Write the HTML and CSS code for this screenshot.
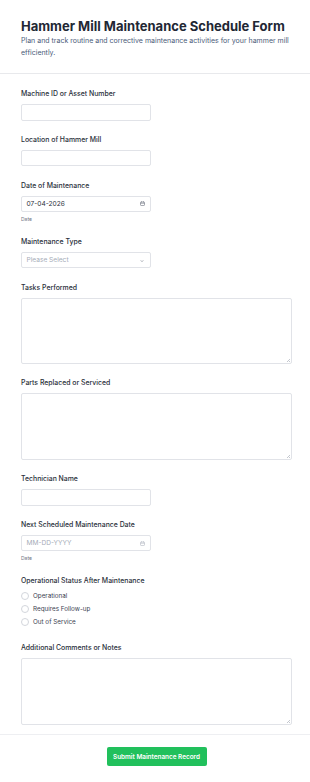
FILE: index.html
```html
<!DOCTYPE html>
<html lang="en">
<head>
<meta charset="utf-8">
<title>Hammer Mill Maintenance Schedule Form</title>
<link rel="stylesheet" href="styles.css">
</head>
<body>
<header class="header">
  <h1 class="title">Hammer Mill Maintenance Schedule Form</h1>
  <p class="subtitle">Plan and track routine and corrective maintenance activities for your hammer mill efficiently.</p>
</header>
<form class="form">
  <div class="field">
    <label class="label">Machine ID or Asset Number</label>
    <input class="input short" type="text">
  </div>
  <div class="field">
    <label class="label">Location of Hammer Mill</label>
    <input class="input short" type="text">
  </div>
  <div class="field">
    <label class="label">Date of Maintenance</label>
    <div class="input short boxed"><span class="value">07-04-2026</span>
      <svg class="cal" viewBox="0 0 10 10" width="5" height="5"><rect x="1" y="2" width="8" height="7" rx="1.2" fill="none" stroke="#6b7280" stroke-width="1.2"/><path d="M3 0.5v2.5M7 0.5v2.5M1 4.5h8" stroke="#6b7280" stroke-width="1.2"/></svg>
    </div>
    <div class="sub">Date</div>
  </div>
  <div class="field">
    <label class="label">Maintenance Type</label>
    <div class="input short boxed"><span class="placeholder">Please Select</span>
      <svg class="chev" viewBox="0 0 10 10" width="4" height="4"><path d="M2 3.5l3 3 3-3" fill="none" stroke="#6b7280" stroke-width="1.6"/></svg>
    </div>
  </div>
  <div class="field">
    <label class="label">Tasks Performed</label>
    <div class="area"><textarea class="textarea"></textarea></div>
  </div>
  <div class="field">
    <label class="label">Parts Replaced or Serviced</label>
    <div class="area"><textarea class="textarea"></textarea></div>
  </div>
  <div class="field">
    <label class="label">Technician Name</label>
    <input class="input short" type="text">
  </div>
  <div class="field">
    <label class="label">Next Scheduled Maintenance Date</label>
    <div class="input short boxed"><span class="placeholder">MM-DD-YYYY</span>
      <svg class="cal" viewBox="0 0 10 10" width="5" height="5"><rect x="1" y="2" width="8" height="7" rx="1.2" fill="none" stroke="#b4b9c3" stroke-width="1.2"/><path d="M3 0.5v2.5M7 0.5v2.5M1 4.5h8" stroke="#b4b9c3" stroke-width="1.2"/></svg>
    </div>
    <div class="sub">Date</div>
  </div>
  <div class="field">
    <label class="label radio-label">Operational Status After Maintenance</label>
    <div class="radios">
      <label class="radio"><span class="dot"></span>Operational</label>
      <label class="radio"><span class="dot"></span>Requires Follow-up</label>
      <label class="radio"><span class="dot"></span>Out of Service</label>
    </div>
  </div>
  <div class="field last">
    <label class="label">Additional Comments or Notes</label>
    <div class="area"><textarea class="textarea"></textarea></div>
  </div>
</form>
<footer class="footer">
  <button class="submit" type="button">Submit Maintenance Record</button>
</footer>
</body>
</html>
```
FILE: styles.css
```css
html, body {
  margin: 0;
  padding: 0;
  background: #ffffff;
}
body {
  font-family: Inter, "Noto Sans", sans-serif;
  color: #1f2533;
  width: 310px;
}
.header {
  padding: 17px 18px 14px 21px;
  border-bottom: 1px solid #e8e9ec;
}
.title {
  margin: 0;
  font-size: 13px;
  line-height: 18px;
  font-weight: 700;
  color: #222734;
}
.subtitle {
  margin: 0;
  font-size: 7px;
  line-height: 12px;
  color: #4a5a78;
}
.form {
  padding: 15px 18px 9.5px 21px;
  border-bottom: 1px solid #eeeff2;
}
.field {
  display: flex;
  flex-direction: column;
  align-items: flex-start;
  margin-bottom: 14.25px;
}
.field.last {
  margin-bottom: 0;
}
.label {
  display: block;
  font-size: 6.9px;
  line-height: 10px;
  font-weight: 500;
  color: #2a2f3a;
  margin-bottom: 5px;
}
.radio-label {
  margin-bottom: 3.8px;
}
.input {
  box-sizing: border-box;
  height: 16.5px;
  border: 1px solid #e1e3e8;
  border-radius: 2px;
  background: #fff;
  margin: 0;
  padding: 0 4px;
  font-family: inherit;
  font-size: 6.6px;
  outline: none;
}
.short {
  width: 130px;
}
.boxed {
  display: flex;
  align-items: center;
  justify-content: space-between;
}
.value {
  color: #2a2f3a;
  padding-left: 0.5px;
}
.placeholder {
  color: #a6acb8;
  padding-left: 0.5px;
}
.cal {
  margin-right: 1.5px;
}
.chev {
  margin-right: 2.5px;
  margin-top: 1px;
}
.sub {
  font-size: 5px;
  line-height: 7px;
  color: #6b7280;
  margin-top: 3.5px;
}
.area {
  width: 271px;
  height: 66.5px;
  position: relative;
}
.area::after {
  content: "";
  position: absolute;
  right: 2px;
  bottom: 2px;
  width: 3px;
  height: 3px;
  background: linear-gradient(135deg, transparent 45%, #c4c8cf 45%, #c4c8cf 60%, transparent 60%, transparent 75%, #c4c8cf 75%);
}
.textarea {
  box-sizing: border-box;
  display: block;
  width: 100%;
  height: 100%;
  margin: 0;
  border: 1px solid #e1e3e8;
  border-radius: 2px;
  resize: none;
  outline: none;
  font-family: inherit;
}
.radios {
  display: flex;
  flex-direction: column;
}
.radio {
  display: flex;
  align-items: center;
  height: 13px;
  font-size: 6.3px;
  color: #3a4150;
}
.dot {
  box-sizing: border-box;
  width: 8px;
  height: 8px;
  border: 1px solid #d3d6dc;
  border-radius: 50%;
  margin-right: 4px;
  background: #fff;
}
.footer {
  display: flex;
  justify-content: center;
  padding: 12.3px 18px 0 21px;
}
.submit {
  width: 100px;
  height: 19px;
  border: none;
  border-radius: 2px;
  background: #21c05c;
  color: #ffffff;
  font-family: inherit;
  font-size: 6.4px;
  font-weight: 600;
  padding: 0;
}
```
